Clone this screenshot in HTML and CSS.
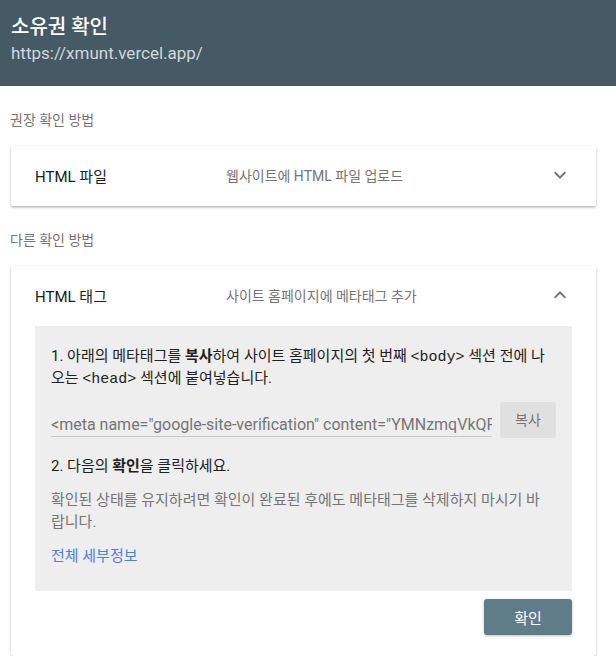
FILE: index.html
```html
<!DOCTYPE html>
<html lang="ko">
<head>
<meta charset="utf-8">
<title>소유권 확인</title>
<link rel="stylesheet" href="styles.css">
</head>
<body>
<header class="topbar">
  <h1 class="topbar-title">소유권 확인</h1>
  <div class="topbar-url">https://xmunt.vercel.app/</div>
</header>
<main class="content">
  <div class="section-label">권장 확인 방법</div>
  <section class="card">
    <div class="card-head">
      <span class="method-name">HTML 파일</span>
      <span class="method-desc">웹사이트에 HTML 파일 업로드</span>
      <svg class="chevron" viewBox="0 0 24 24" width="24" height="24"><path d="M7.41 8.59L12 13.17l4.59-4.58L18 10l-6 6-6-6z"/></svg>
    </div>
  </section>

  <div class="section-label">다른 확인 방법</div>
  <section class="card">
    <div class="card-head">
      <span class="method-name">HTML 태그</span>
      <span class="method-desc">사이트 홈페이지에 메타태그 추가</span>
      <svg class="chevron" viewBox="0 0 24 24" width="24" height="24"><path d="M7.41 15.41L12 10.83l4.59 4.58L18 14l-6-6-6 6z"/></svg>
    </div>
    <div class="card-body">
      <div class="instructions">
        <p class="step">1. 아래의 메타태그를 <b>복사</b>하여 사이트 홈페이지의 첫 번째 <code>&lt;body&gt;</code> 섹션 전에 나오는 <code>&lt;head&gt;</code> 섹션에 붙여넣습니다.</p>
        <div class="copy-row">
          <div class="meta-field">&lt;meta name="google-site-verification" content="YMNzmqVkQFxK2p8sT0vR4hL9cWmA3eJ6uD1bG7nPoYs" /&gt;</div>
          <button class="copy-btn" type="button">복사</button>
        </div>
        <p class="step step-two">2. 다음의 <b>확인</b>을 클릭하세요.</p>
        <p class="note">확인된 상태를 유지하려면 확인이 완료된 후에도 메타태그를 삭제하지 마시기 바랍니다.</p>
        <a class="details-link" href="#">전체 세부정보</a>
      </div>
      <div class="actions">
        <button class="verify-btn" type="button">확인</button>
      </div>
    </div>
  </section>
</main>
</body>
</html>
```

FILE: styles.css
```css
html, body {
  margin: 0;
  padding: 0;
  background: #ffffff;
}

body {
  font-family: Roboto, "Noto Sans CJK KR", sans-serif;
  color: #212121;
}

.topbar {
  background: #455a64;
  padding: 14px 11px 21px;
  height: 51px;
}

.topbar-title {
  margin: 0;
  font-size: 20px;
  line-height: 26px;
  font-weight: 500;
  color: #ffffff;
}

.topbar-url {
  margin-top: 1px;
  font-size: 17px;
  line-height: 24px;
  color: #cfd8dc;
}

.content {
  padding: 0 20px 0 11px;
}

.section-label {
  margin: 24px 0 16px -1px;
  font-size: 14px;
  line-height: 20px;
  color: #757575;
}

.card {
  background: #ffffff;
  border-radius: 2px;
  box-shadow: 0 1px 3px rgba(0, 0, 0, 0.22), 0 2px 2px rgba(0, 0, 0, 0.10);
}

.card-head {
  display: grid;
  grid-template-columns: 191px 1fr 24px;
  align-items: center;
  height: 58px;
  padding: 0 24px 2px;
}

.method-name {
  font-size: 15px;
  color: #212121;
}

.method-desc {
  font-size: 14px;
  color: #757575;
}

.chevron {
  fill: #757575;
}

.card-body {
  padding: 0 24px 21px;
}

.instructions {
  background: #eeeeee;
  padding: 19px 16px 24px;
}

.step {
  margin: 0;
  font-size: 15px;
  line-height: 22px;
  color: #212121;
}

.step b {
  font-weight: 700;
}

.step code {
  font-family: "Liberation Mono", "DejaVu Sans Mono", monospace;
  font-size: 15px;
  line-height: 1;
}

.copy-row {
  display: flex;
  align-items: flex-start;
  gap: 8px;
  margin-top: 13px;
}

.meta-field {
  flex: 1;
  min-width: 0;
  overflow: hidden;
  white-space: nowrap;
  margin-top: 13px;
  padding-bottom: 1px;
  border-bottom: 1px solid #c8c8c8;
  font-size: 16px;
  line-height: 20px;
  color: #757575;
}

.copy-btn {
  width: 56px;
  height: 36px;
  border: none;
  border-radius: 3px;
  background: #e0e0e0;
  color: #757575;
  font-family: Roboto, "Noto Sans CJK KR", sans-serif;
  font-size: 14px;
  padding: 0 0 2px;
}

.step-two {
  margin-top: 17px;
}

.note {
  margin: 12px 0 0;
  padding-right: 14px;
  font-size: 15px;
  line-height: 22px;
  color: #757575;
}

.details-link {
  display: block;
  margin-top: 12px;
  font-size: 15px;
  line-height: 22px;
  color: #4a7fe0;
  text-decoration: none;
}

.actions {
  display: flex;
  justify-content: flex-end;
  margin-top: 8px;
}

.verify-btn {
  width: 88px;
  height: 36px;
  border: none;
  border-radius: 3px;
  background: #5f7d88;
  color: #ffffff;
  font-family: Roboto, "Noto Sans CJK KR", sans-serif;
  font-size: 15px;
  box-shadow: 0 1px 3px rgba(0, 0, 0, 0.25);
}
```
